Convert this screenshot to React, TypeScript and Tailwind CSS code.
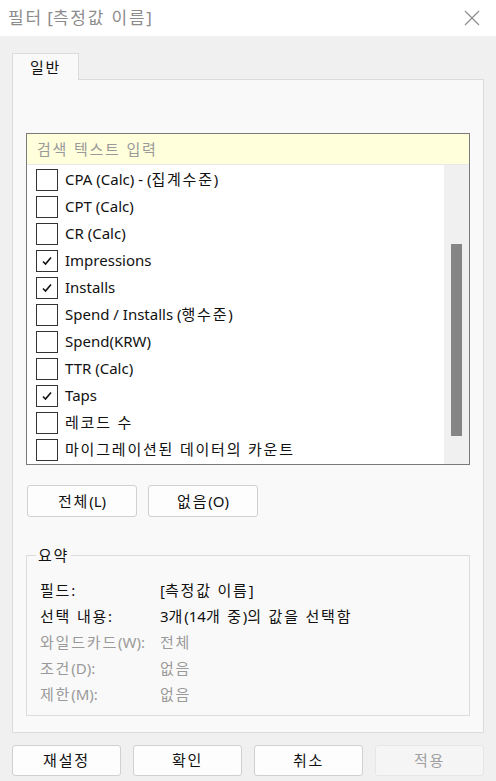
import React from "react";

const items = [
  { label: "CPA (Calc) - (집계수준)", checked: false },
  { label: "CPT (Calc)", checked: false },
  { label: "CR (Calc)", checked: false },
  { label: "Impressions", checked: true },
  { label: "Installs", checked: true },
  { label: "Spend / Installs (행수준)", checked: false },
  { label: "Spend(KRW)", checked: false },
  { label: "TTR (Calc)", checked: false },
  { label: "Taps", checked: true },
  { label: "레코드 수", checked: false },
  { label: "마이그레이션된 데이터의 카운트", checked: false },
];

const summary = [
  { k: "필드:", v: "[측정값 이름]", dim: false },
  { k: "선택 내용:", v: "3개(14개 중)의 값을 선택함", dim: false },
  { k: "와일드카드(W):", v: "전체", dim: true },
  { k: "조건(D):", v: "없음", dim: true },
  { k: "제한(M):", v: "없음", dim: true },
];

// Hangul glyphs render narrower here than in the original UI font, so widen them a bit
function K({ children }: { children: string }) {
  const parts = children.split(/([\uAC00-\uD7A3]+(?: [\uAC00-\uD7A3]+)*)/);
  return (
    <>
      {parts.map((p, i) =>
        /[\uAC00-\uD7A3]/.test(p) ? (
          <span key={i} className="tracking-[1.8px]">
            {p}
          </span>
        ) : (
          <React.Fragment key={i}>{p}</React.Fragment>
        )
      )}
    </>
  );
}

function Check({ on }: { on: boolean }) {
  return (
    <div className="w-[22px] h-[22px] border border-[#333] bg-white flex items-center justify-center shrink-0">
      {on && (
        <svg width="12" height="12" viewBox="0 0 12 12">
          <path d="M2 6.5 L4.5 9 L10 2.5" fill="none" stroke="#111" strokeWidth="1.6" />
        </svg>
      )}
    </div>
  );
}

export default function App() {
  return (
    <div
      className="w-[496px] h-[781px] bg-[#f0f0f0] flex flex-col text-[15px] text-[#111]"
      style={{ fontFamily: '"Noto Sans", "Noto Sans CJK KR", sans-serif' }}
    >
      {/* Title bar */}
      <div className="h-[36px] bg-white flex items-center justify-between pl-[8px] pr-[16px]">
        <span className="text-[17px] text-[#8c8c8c]">
          <K>필터 [측정값 이름]</K>
        </span>
        <svg width="16" height="16" viewBox="0 0 16 16">
          <path d="M1 1 L15 15 M15 1 L1 15" stroke="#8c8c8c" strokeWidth="1.2" />
        </svg>
      </div>

      {/* Tab */}
      <div className="pl-[12px] pt-[17px]">
        <div className="w-[67px] h-[27px] bg-[#f9f9f9] border border-b-0 border-[#dcdcdc] flex items-center justify-center text-[15px] relative z-10 -mb-px">
          <K>일반</K>
        </div>
      </div>

      {/* Tab panel */}
      <div className="mx-[12px] w-[472px] h-[654px] bg-[#f9f9f9] border border-[#dcdcdc] px-[13px] pt-[53px]">
        {/* List */}
        <div className="h-[332px] border border-[#7a7a7a] bg-white flex flex-col">
          <div className="h-[31px] bg-[#ffffdc] border-b border-[#e8e8e8] flex items-center pl-[10px] text-[#9a9a9a]">
            <K>검색 텍스트 입력</K>
          </div>
          <div className="flex flex-1 min-h-0">
            <div className="flex-1 pl-[9px] pt-[1px]">
              {items.map((it) => (
                <div key={it.label} className="h-[27px] flex items-center gap-[7px] whitespace-nowrap">
                  <Check on={it.checked} />
                  <span>
                    <K>{it.label}</K>
                  </span>
                </div>
              ))}
            </div>
            <div className="w-[25px] bg-[#f0f0f0] pt-[79px] pl-[7px]">
              <div className="w-[11px] h-[192px] bg-[#858585]" />
            </div>
          </div>
        </div>

        {/* Buttons */}
        <div className="flex gap-[11px] mt-[20px] pl-[1px]">
          <button className="w-[110px] h-[32px] bg-[#fdfdfd] border border-[#d0d0d0] rounded-[3px] text-[15px]">
            <K>전체(L)</K>
          </button>
          <button className="w-[110px] h-[32px] bg-[#fdfdfd] border border-[#d0d0d0] rounded-[3px] text-[15px]">
            <K>없음(O)</K>
          </button>
        </div>

        {/* Summary */}
        <div className="mt-[38px] h-[161px] border border-[#dcdcdc] relative pt-[21px] pl-[13px]">
          <span className="absolute -top-[12px] left-[9px] bg-[#f9f9f9] px-[2px]">
            <K>요약</K>
          </span>
          {summary.map((r) => (
            <div
              key={r.k}
              className={`flex h-[26px] items-center ${r.dim ? "text-[#9a9a9a]" : "text-[#111]"}`}
            >
              <span className="w-[120px] whitespace-nowrap">
                <K>{r.k}</K>
              </span>
              <span>
                <K>{r.v}</K>
              </span>
            </div>
          ))}
        </div>
      </div>

      {/* Bottom buttons */}
      <div className="flex gap-[12px] px-[12px] mt-[12px]">
        {["재설정", "확인", "취소"].map((t) => (
          <button
            key={t}
            className="w-[109px] h-[31px] bg-[#fdfdfd] border border-[#d0d0d0] rounded-[3px] text-[15px]"
          >
            <K>{t}</K>
          </button>
        ))}
        <button className="w-[109px] h-[31px] bg-[#f5f5f5] border border-[#e6e6e6] rounded-[3px] text-[15px] text-[#a0a0a0]">
          <K>적용</K>
        </button>
      </div>
    </div>
  );
}
